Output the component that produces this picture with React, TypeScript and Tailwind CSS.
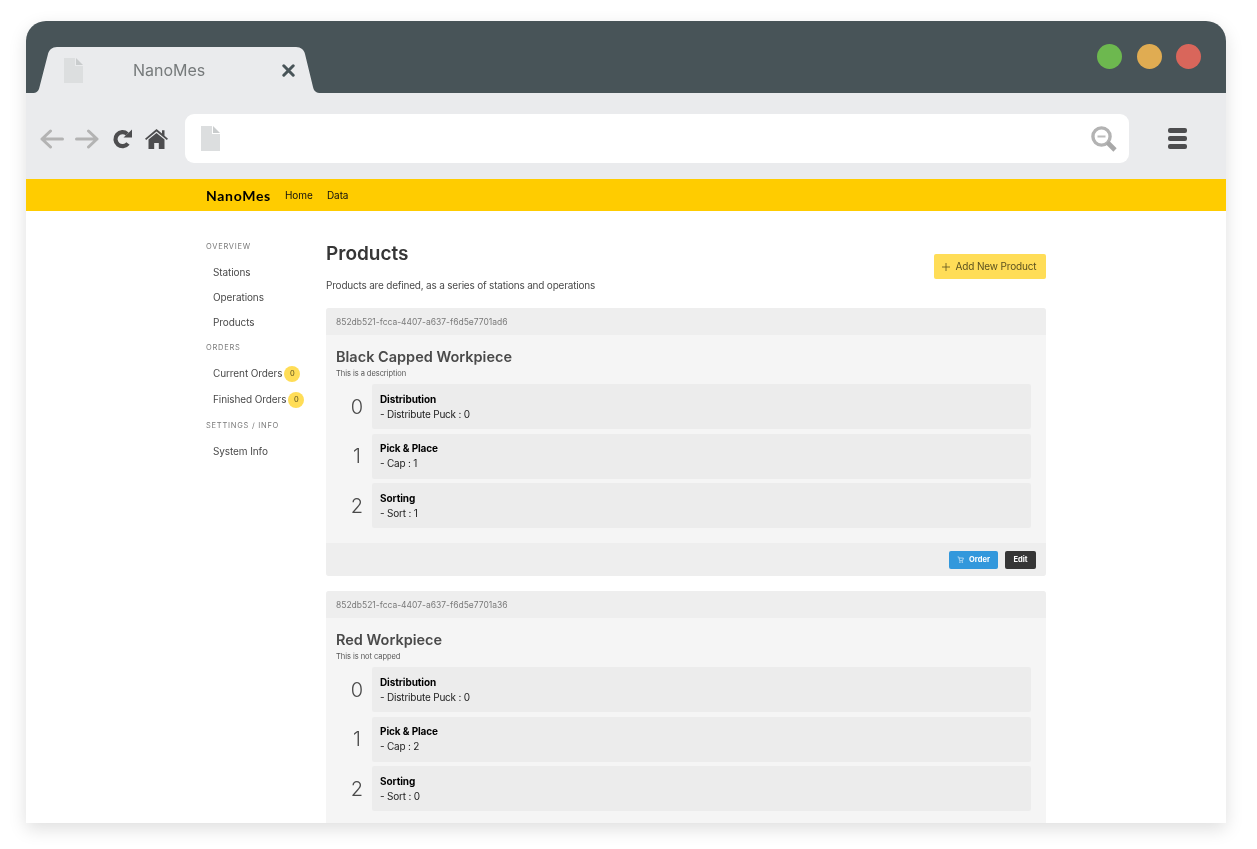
import React from "react";

const Doc = () => (
  <svg width="19" height="25" viewBox="0 0 19 25" className="shrink-0">
    <path d="M0 0H11V8H19V25H0Z" fill="#dcdedf" />
    <path d="M12 0L19 7H12Z" fill="#c9cccd" />
  </svg>
);

const Arrow = ({ flip }: { flip?: boolean }) => (
  <svg width="24" height="20" viewBox="0 0 24 20" fill="none" stroke="#b3b3b3" strokeWidth="3" strokeLinecap="round" strokeLinejoin="round" className={flip ? "rotate-180" : ""}>
    <path d="M22.5 10H2M10.5 2L2 10L10.5 18" />
  </svg>
);

const Step = ({ n, title, text }: { n: number; title: string; text: string }) => (
  <div className="flex h-[45px] items-stretch">
    <div className="w-[36px] pl-[6px] flex items-center justify-center text-[20px] font-light text-[#4a4a4a]">{n}</div>
    <div className="flex-1 bg-[#ececec] rounded-[2px] pl-[8px] flex flex-col justify-center leading-[15px] text-[10px] tracking-[-0.2px] text-[#222]">
      <div className="font-bold text-black tracking-[-0.1px]">{title}</div>
      <div>{text}</div>
    </div>
  </div>
);

const Card = ({ id, name, desc, caps, sort, last }: { id: string; name: string; desc: string; caps: number; sort: number; last?: boolean }) => (
  <div className="mb-[15.4px] rounded-[3px] bg-[#f5f5f5]">
    <div className="h-[27px] bg-[#eeeeee] rounded-t-[3px] px-[10px] pt-[1px] flex items-center text-[8.5px] text-[#7a7a7a]">{id}</div>
    <div className="pl-[10px] pr-[15px] pt-[12px] pb-[15px]">
      <div className="text-[14.5px] leading-[20px] font-semibold text-[#4a4a4a]">{name}</div>
      <div className="text-[7.5px] leading-[10px] mt-[2px] mb-[5px] tracking-[-0.05px] text-[#555]">{desc}</div>
      <div className="flex flex-col gap-[4.5px]">
        <Step n={0} title="Distribution" text="- Distribute Puck : 0" />
        <Step n={1} title="Pick & Place" text={`- Cap : ${caps}`} />
        <Step n={2} title="Sorting" text={`- Sort : ${sort}`} />
      </div>
    </div>
    {!last && (
      <div className="h-[33px] bg-[#eeeeee] rounded-b-[3px] px-[10px] flex items-center justify-end gap-[7px] text-[7.5px] font-bold text-white">
        <div className="h-[18px] w-[49px] bg-[#3298dc] rounded-[2px] flex items-center justify-center gap-[5px]">
          <svg width="7" height="7" viewBox="0 0 24 24" fill="none" stroke="white" strokeWidth="2">
            <path d="M2 3h4l3 13h10l3-9H7" />
            <circle cx="10" cy="21" r="1.5" />
            <circle cx="18" cy="21" r="1.5" />
          </svg>
          Order
        </div>
        <div className="h-[18px] w-[31px] bg-[#363636] rounded-[2px] flex items-center justify-center">Edit</div>
      </div>
    )}
  </div>
);

const Label = ({ children }: { children: React.ReactNode }) => (
  <div className="h-[26px] flex items-center text-[7.5px] tracking-[0.75px] text-[#7a7a7a]">{children}</div>
);

const Item = ({ children, badge }: { children: React.ReactNode; badge?: boolean }) => (
  <div className={`${badge ? "h-[26px] pb-[1px]" : "h-[25px]"} flex items-center pl-[7px] text-[10px] tracking-[-0.1px] text-[#4a4a4a] whitespace-nowrap`}>
    {children}
    {badge && (
      <span className="ml-[2px] w-[16px] h-[16px] rounded-full bg-[#ffdd57] flex items-center justify-center text-[7.5px] text-[#554a1d]">0</span>
    )}
  </div>
);

export default function App() {
  return (
    <div className="h-[849px] bg-white pt-[21px] pl-[26px] overflow-hidden" style={{ fontFamily: "Inter, 'Liberation Sans', sans-serif" }}>
      <div className="relative w-[1200px] h-[802px] rounded-t-[20px] overflow-hidden bg-white shadow-[0_6px_18px_rgba(0,0,0,0.13)] will-change-transform">
        {/* tab strip */}
        <div className="relative h-[72px] bg-[#485458] flex items-center justify-end gap-[14.5px] pr-[25px] pb-[1px]">
          <span className="w-[25px] h-[25px] rounded-full bg-[#6db84f]" />
          <span className="w-[25px] h-[25px] rounded-full bg-[#e0ac52]" />
          <span className="w-[25px] h-[25px] rounded-full bg-[#d9665b]" />
          <svg width="292" height="46" viewBox="0 0 292 46" className="absolute left-[6px] top-[26px]">
            <path d="M0 46C5 46 6.5 44 7.5 40L16 7C17 3 20 0 25 0H264C269 0 272 3 273 7L281 40C282 44 284 46 289 46Z" fill="#eaebed" />
          </svg>
          <div className="absolute left-[38px] top-[37px]"><Doc /></div>
          <span className="absolute left-[107px] top-[37px] text-[16px] leading-[24px] text-[#767a7b]">NanoMes</span>
          <svg width="13" height="13" viewBox="0 0 13 13" className="absolute left-[256px] top-[43px]" stroke="#485458" strokeWidth="3" strokeLinecap="round">
            <path d="M1.8 1.8L11.2 11.2M11.2 1.8L1.8 11.2" />
          </svg>
        </div>
        {/* toolbar */}
        <div className="h-[86px] bg-[#eaebed] flex items-center pl-[14px] pr-[39px] pt-[5px]">
          <div><Arrow /></div>
          <div className="ml-[11px]"><Arrow flip /></div>
          <svg width="20" height="20" viewBox="0 0 20 20" className="ml-[13px] mt-[1px]">
            <path d="M16 14.5A7 7 0 1 1 15.2 5" fill="none" stroke="#4d4d4f" strokeWidth="4.2" />
            <path d="M11.5 8.5L20 8.5L20 0.5Z" fill="#4d4d4f" />
          </svg>
          <svg width="23" height="20" viewBox="0 0 23 20" className="ml-[13px]">
            <path d="M11.5 0L17 4.6V1.2H19.5V6.7L23 9.7L21.8 11L11.5 2.6L1.2 11L0 9.7Z" fill="#4d4d4f" />
            <path d="M11.5 4L19.5 10.6V20H13.8V14H9.2V20H3.5V10.6Z" fill="#4d4d4f" />
          </svg>
          <div className="ml-[17px] w-[944px] h-[49px] bg-white rounded-[9px] flex items-center justify-between pl-[16px] pr-[12px]">
            <Doc />
            <svg width="26" height="26" viewBox="0 0 26 26" fill="none">
              <circle cx="10.5" cy="10.5" r="8.6" stroke="#b3b3b3" strokeWidth="3.4" />
              <path d="M6.5 10.5H14.5" stroke="#bdbdbd" strokeWidth="1.8" />
              <path d="M16.5 16.5L24 24" stroke="#a8a8a8" strokeWidth="4.6" />
            </svg>
          </div>
          <div className="ml-[39px] w-[19px] flex flex-col gap-[3.5px]">
            <span className="h-[4.5px] rounded-[2px] bg-[#4d4d4f]" />
            <span className="h-[4.5px] rounded-[2px] bg-[#4d4d4f]" />
            <span className="h-[4.5px] rounded-[2px] bg-[#4d4d4f]" />
          </div>
        </div>
        {/* app nav */}
        <div className="h-[32px] bg-[#ffcc00] flex items-center pl-[180px] pt-[1px]">
          <span className="text-[14px] font-bold tracking-[0.7px] text-black w-[79px]" style={{ fontFamily: "Lato, sans-serif" }}>NanoMes</span>
          <span className="text-[10px] tracking-[-0.1px] text-[#111] w-[42px]">Home</span>
          <span className="text-[10px] tracking-[-0.1px] text-[#111]">Data</span>
        </div>
        {/* page */}
        <div className="flex pl-[180px] pt-[22px]">
          <div className="w-[120px] shrink-0 pt-[1px]">
            <Label>OVERVIEW</Label>
            <Item>Stations</Item>
            <Item>Operations</Item>
            <Item>Products</Item>
            <Label>ORDERS</Label>
            <Item badge>Current Orders</Item>
            <Item badge>Finished Orders</Item>
            <Label>SETTINGS / INFO</Label>
            <Item>System Info</Item>
          </div>
          <div className="w-[720px] shrink-0">
            <div className="flex justify-between h-[75px] pt-[8px]">
              <div>
                <div className="text-[19px] leading-[26px] font-semibold text-[#363636]">Products</div>
                <div className="text-[10px] leading-[14px] mt-[11px] tracking-[-0.2px] text-[#4a4a4a]">Products are defined, as a series of stations and operations</div>
              </div>
              <div className="mt-[13px] w-[112px] h-[25px] bg-[#ffdd57] rounded-[2px] flex items-center justify-center gap-[6px] pr-[2px] text-[10px] tracking-[-0.15px] text-[#5c5220]">
                <svg width="8" height="8" viewBox="0 0 8 8" stroke="#5c5220" strokeWidth="0.8">
                  <path d="M4 0V8M0 4H8" />
                </svg>
                Add New Product
              </div>
            </div>
            <Card id="852db521-fcca-4407-a637-f6d5e7701ad6" name="Black Capped Workpiece" desc="This is a description" caps={1} sort={1} />
            <Card id="852db521-fcca-4407-a637-f6d5e7701a36" name="Red Workpiece" desc="This is not capped" caps={2} sort={0} last />
          </div>
        </div>
      </div>
    </div>
  );
}
